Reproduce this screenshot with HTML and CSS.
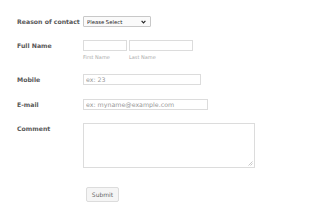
FILE: index.html
```html
<!DOCTYPE html>
<html lang="en">
<head>
    <meta charset="UTF-8">
    <title>Contact</title>
    <link rel="stylesheet" href="styles.css">
</head>

<body>
    <form class="form">
        <div class="row">
            <label class="label" for="reason">Reason of contact</label>
            <div class="select-wrap">
                <select id="reason" class="select">
                    <option>Please Select</option>
                    <option>Sales</option>
                    <option>Support</option>
                </select>
                <svg class="chevron" width="5" height="4" viewBox="0 0 5 4">
                    <path d="M0.6 0.8 L2.5 2.9 L4.4 0.8" fill="none" stroke="#222" stroke-width="1.1"/>
                </svg>
            </div>
        </div>
        <div class="row row-name">
            <label class="label" for="first">Full Name</label>
            <div class="name-fields">
                <div class="sub">
                    <input type="text" id="first" class="input first">
                    <span class="sublabel">First Name</span>
                </div>
                <div class="sub">
                    <input type="text" id="last" class="input last">
                    <span class="sublabel">Last Name</span>
                </div>
            </div>
        </div>
        <div class="row row-mobile">
            <label class="label" for="mobile">Mobile</label>
            <input type="text" id="mobile" class="input mobile" placeholder="ex: 23">
        </div>
        <div class="row row-email">
            <label class="label" for="email">E-mail</label>
            <input type="email" id="email" class="input email" placeholder="ex: myname@example.com">
        </div>
        <div class="row row-comment">
            <label class="label" for="comment">Comment</label>
            <div class="textarea-wrap">
                <textarea id="comment" class="textarea"></textarea>
                <!-- resize grip -->
                <svg class="grip" width="5" height="5" viewBox="0 0 5 5">
                    <path d="M0.5 4.5 L4.5 0.5 M2.5 4.5 L4.5 2.5" stroke="#bbb" stroke-width="0.8"/>
                </svg>
            </div>
        </div>
        <div class="actions">
            <button type="submit" class="submit">Submit</button>
        </div>
    </form>
</body>
</html>
```

FILE: styles.css
```css
body {
    margin: 0;
    background: #fff;
    font-family: 'DejaVu Sans', Verdana, sans-serif;
}

.form {
    padding: 16px 0 0 17px;
}

.row {
    display: grid;
    grid-template-columns: 66px auto;
    align-items: start;
    margin-bottom: 13px;
}

.label {
    font-size: 6.2px;
    font-weight: bold;
    line-height: 11px;
    color: #585858;
    white-space: nowrap;
}

.select-wrap {
    position: relative;
    width: 68px;
    height: 11px;
}

.select {
    display: block;
    appearance: none;
    -webkit-appearance: none;
    width: 68px;
    height: 11px;
    box-sizing: border-box;
    margin: 0;
    padding: 0 0 0 3px;
    border: 1px solid #c8c8c8;
    border-radius: 1px;
    background: #fafafa;
    font-family: 'DejaVu Sans', Verdana, sans-serif;
    font-size: 5.3px;
    color: #222;
}

.chevron {
    position: absolute;
    right: 5px;
    top: 4px;
}

.name-fields {
    display: flex;
    gap: 2px;
}

.sub {
    display: flex;
    flex-direction: column;
}

.input {
    display: block;
    height: 11px;
    box-sizing: border-box;
    margin: 0;
    padding: 0 2px;
    border: 1px solid #dcdcdc;
    background: #fff;
    font-family: 'DejaVu Sans', Verdana, sans-serif;
    font-size: 6.3px;
    color: #333;
}

.input::placeholder {
    color: #999;
}

.first { width: 44px; }
.last { width: 64px; }
.mobile { width: 118px; }
.email { width: 125px; }

.sublabel {
    margin-top: 3px;
    font-size: 5px;
    line-height: 6px;
    color: #aaa;
}

.row-name { margin-bottom: 14px; }
.row-mobile { margin-bottom: 14px; }
.row-comment { margin-bottom: 19px; }

.textarea-wrap {
    position: relative;
    width: 172px;
    height: 45px;
}

.textarea {
    display: block;
    width: 172px;
    height: 45px;
    box-sizing: border-box;
    margin: 0;
    border: 1px solid #dcdcdc;
    resize: none;
    font-family: 'DejaVu Sans', Verdana, sans-serif;
    font-size: 6.3px;
}

.grip {
    position: absolute;
    right: 2px;
    bottom: 2px;
}

.actions {
    padding-left: 69px;
}

.submit {
    display: block;
    width: 33px;
    height: 15px;
    padding: 0;
    border: 1px solid #dcdcdc;
    border-radius: 2px;
    background: #f5f5f5;
    font-family: 'DejaVu Sans', Verdana, sans-serif;
    font-size: 6px;
    color: #666;
}
```
